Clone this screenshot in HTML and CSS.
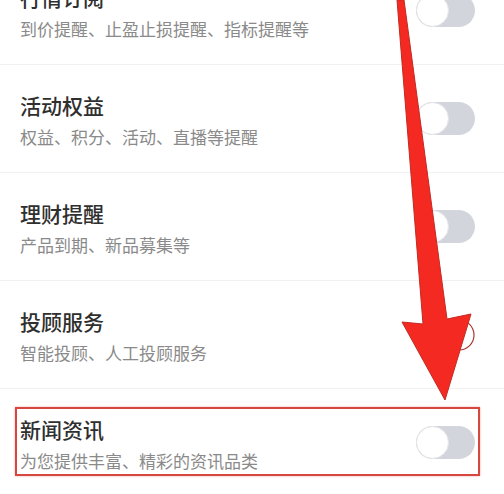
FILE: index.html
```html
<!DOCTYPE html>
<html lang="zh-CN">
<head>
    <meta charset="UTF-8">
    <meta name="viewport" content="width=device-width, initial-scale=1.0">
    <title>消息通知设置</title>
    <link rel="stylesheet" href="styles.css">
</head>
<body>
    <div class="list">
        <div class="item">
            <div class="text">
                <div class="title">行情订阅</div>
                <div class="desc">到价提醒、止盈止损提醒、指标提醒等</div>
            </div>
            <span class="switch"></span>
        </div>
        <div class="item">
            <div class="text">
                <div class="title">活动权益</div>
                <div class="desc">权益、积分、活动、直播等提醒</div>
            </div>
            <span class="switch"></span>
        </div>
        <div class="item">
            <div class="text">
                <div class="title">理财提醒</div>
                <div class="desc">产品到期、新品募集等</div>
            </div>
            <span class="switch"></span>
        </div>
        <div class="item">
            <div class="text">
                <div class="title">投顾服务</div>
                <div class="desc">智能投顾、人工投顾服务</div>
            </div>
            <span class="switch hidden"></span>
        </div>
        <div class="item">
            <div class="mark"></div>
            <div class="text">
                <div class="title">新闻资讯</div>
                <div class="desc">为您提供丰富、精彩的资讯品类</div>
            </div>
            <span class="switch"></span>
        </div>
    </div>

    <svg class="arrow" width="504" height="494" viewBox="0 0 504 494">
        <circle cx="459" cy="335" r="15" fill="none" stroke="#a83a32" stroke-width="1.2"/>
        <polygon points="397,0 404,0 447,319 471,314 445,400 402,322 423,324"
                 fill="#f42a22" stroke="#c22a22" stroke-width="1" stroke-linejoin="round"/>
    </svg>
</body>
</html>
```

FILE: styles.css
```css
body {
    margin: 0;
    position: relative;
    height: 494px;
    overflow: hidden;
    background-color: #fff;
    font-family: "Noto Sans CJK SC", "Noto Sans", sans-serif;
}
.list {
    margin-top: -43px;
}
.item {
    position: relative;
    display: flex;
    align-items: center;
    justify-content: space-between;
    height: 107px;
    padding: 0 29px 0 20px;
    border-bottom: 1px solid #f1f1f1;
}
.text {
    padding-top: 2px;
}
.title {
    font-size: 21px;
    line-height: 30px;
    font-weight: 500;
    color: #2f2f2f;
}
.desc {
    margin-top: 5px;
    font-size: 17px;
    line-height: 24px;
    color: #8a8a8a;
}
.switch {
    position: relative;
    width: 59px;
    height: 33px;
    border-radius: 17px;
    background-color: #d2d5db;
}
.switch::before {
    content: "";
    position: absolute;
    left: 0;
    top: 0;
    width: 31px;
    height: 31px;
    border-radius: 50%;
    background-color: #fff;
    border: 1px solid #e2e4e8;
}
.switch.hidden {
    visibility: hidden;
}
.mark {
    position: absolute;
    left: 15px;
    top: 18px;
    width: 461px;
    height: 65px;
    border: 2px solid #d6473f;
    box-shadow: 0 0 2px #f0a8a4;
}
.arrow {
    position: absolute;
    top: 0;
    left: 0;
    pointer-events: none;
}
```
